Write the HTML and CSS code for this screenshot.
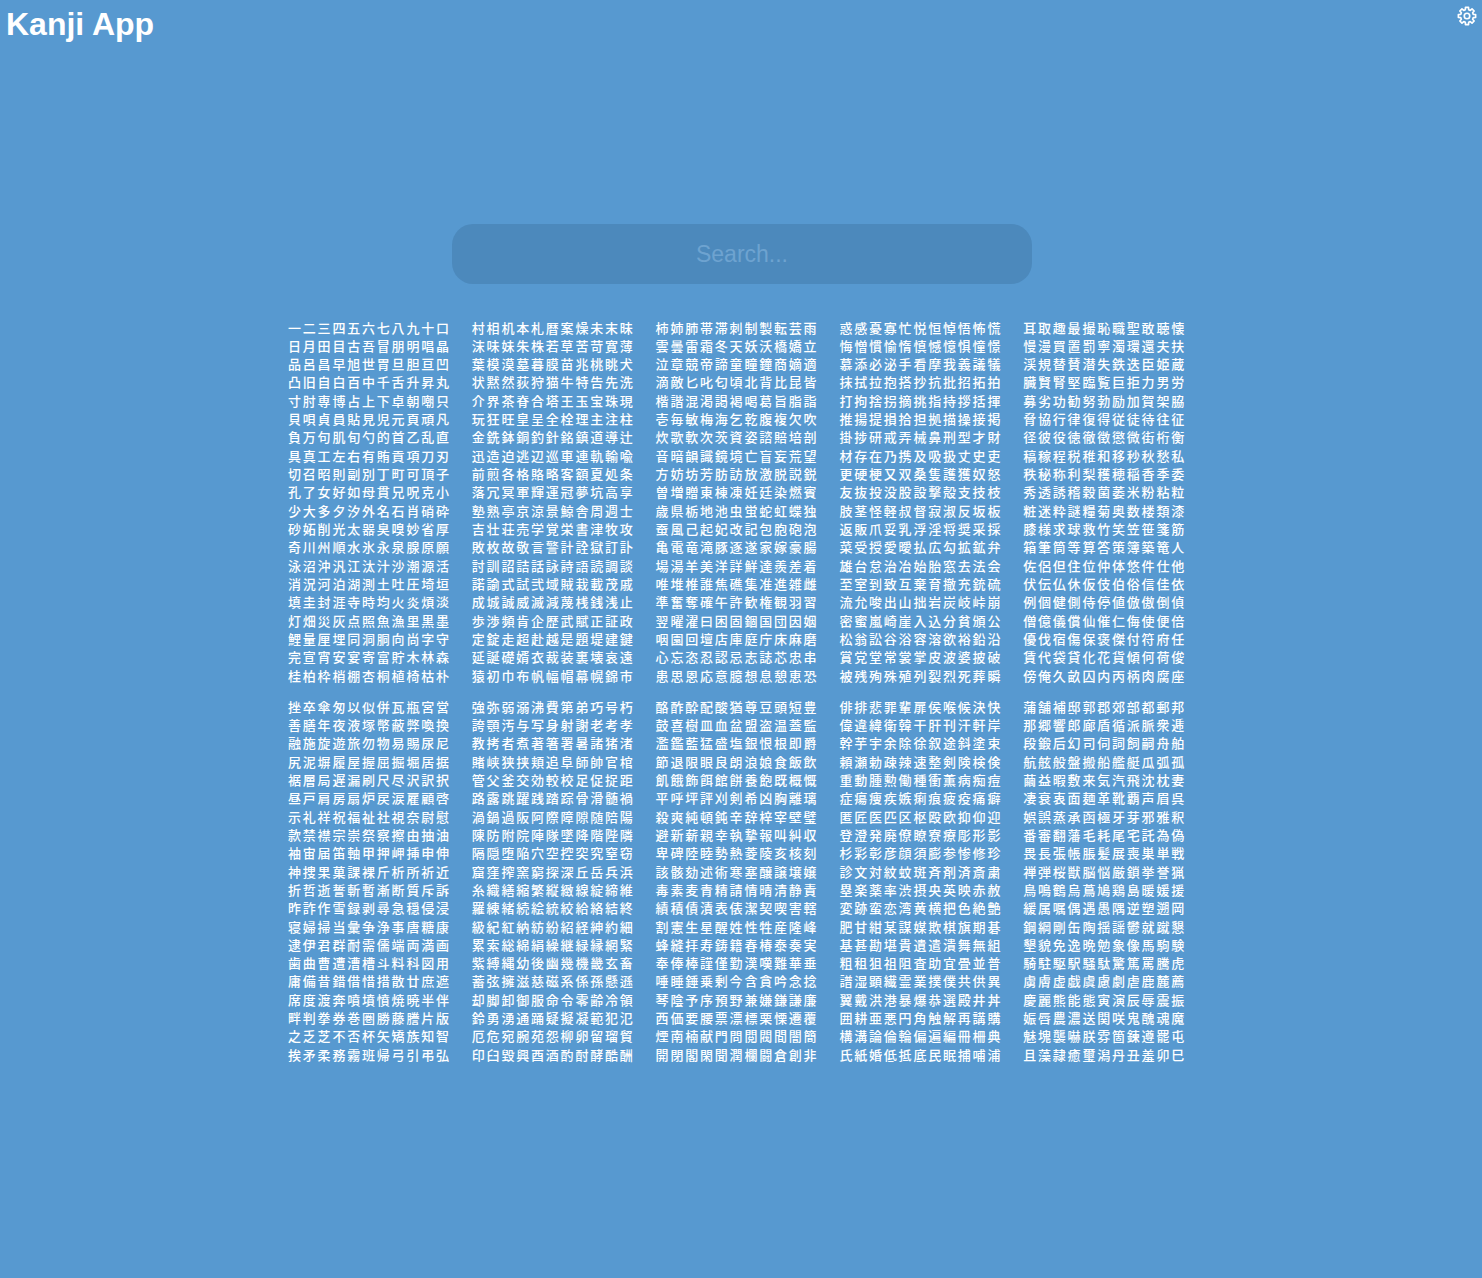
FILE: index.html
```html
<!DOCTYPE html>
<html lang="ja">
<head>
    <meta charset="UTF-8">
    <meta name="viewport" content="width=device-width, initial-scale=1.0">
    <title>Kanji App</title>
    <link rel="stylesheet" href="styles.css">
</head>
<body>
    <header class="top-bar">
        <h1>Kanji App</h1>
        <button class="settings" aria-label="Settings">
            <svg viewBox="0 0 24 24" width="20" height="20" fill="none" stroke="white" stroke-width="2" stroke-linejoin="round">
                <polygon points="9.98,4.47 10.18,1.66 13.82,1.66 14.02,4.47 15.90,5.25 18.02,3.40 20.60,5.98 18.75,8.10 19.53,9.98 22.34,10.18 22.34,13.82 19.53,14.02 18.75,15.90 20.60,18.02 18.02,20.60 15.90,18.75 14.02,19.53 13.82,22.34 10.18,22.34 9.98,19.53 8.10,18.75 5.98,20.60 3.40,18.02 5.25,15.90 4.47,14.02 1.66,13.82 1.66,10.18 4.47,9.98 5.25,8.10 3.40,5.98 5.98,3.40 8.10,5.25"/>
                <circle cx="12" cy="12" r="3.3"/>
            </svg>
        </button>
    </header>

    <div class="search-wrap">
        <input class="search" type="text" placeholder="Search...">
    </div>

    <main class="kanji-list">
        <section class="kanji-block">
            <div class="kanji-col">
                <p>一二三四五六七八九十口</p>
                <p>日月田目古吾冒朋明唱晶</p>
                <p>品呂昌早旭世胃旦胆亘凹</p>
                <p>凸旧自白百中千舌升昇丸</p>
                <p>寸肘専博占上下卓朝嘲只</p>
                <p>貝唄貞員貼見児元頁頑凡</p>
                <p>負万句肌旬勺的首乙乱直</p>
                <p>具真工左右有賄貢項刀刃</p>
                <p>切召昭則副別丁町可頂子</p>
                <p>孔了女好如母貫兄呪克小</p>
                <p>少大多夕汐外名石肖硝砕</p>
                <p>砂妬削光太器臭嗅妙省厚</p>
                <p>奇川州順水氷永泉腺原願</p>
                <p>泳沼沖汎江汰汁沙潮源活</p>
                <p>消況河泊湖測土吐圧埼垣</p>
                <p>填圭封涯寺時均火炎煩淡</p>
                <p>灯畑災灰点照魚漁里黒墨</p>
                <p>鯉量厘埋同洞胴向尚字守</p>
                <p>完宣宵安宴寄富貯木林森</p>
                <p>桂柏枠梢棚杏桐植椅枯朴</p>
            </div>
            <div class="kanji-col">
                <p>村相机本札暦案燥未末昧</p>
                <p>沫味妹朱株若草苦苛寛薄</p>
                <p>葉模漠墓暮膜苗兆桃眺犬</p>
                <p>状黙然荻狩猫牛特告先洗</p>
                <p>介界茶脊合塔王玉宝珠現</p>
                <p>玩狂旺皇呈全栓理主注柱</p>
                <p>金銑鉢銅釣針銘鎮道導辻</p>
                <p>迅造迫逃辺巡車連軌輸喩</p>
                <p>前煎各格賂略客額夏処条</p>
                <p>落冗冥軍輝運冠夢坑高享</p>
                <p>塾熟亭京涼景鯨舎周週士</p>
                <p>吉壮荘売学覚栄書津牧攻</p>
                <p>敗枚故敬言警計詮獄訂訃</p>
                <p>討訓詔詰話詠詩語読調談</p>
                <p>諾諭式試弐域賊栽載茂戚</p>
                <p>成城誠威滅減蔑桟銭浅止</p>
                <p>歩渉頻肯企歴武賦正証政</p>
                <p>定錠走超赴越是題堤建鍵</p>
                <p>延誕礎婿衣裁装裏壊哀遠</p>
                <p>猿初巾布帆幅帽幕幌錦市</p>
            </div>
            <div class="kanji-col">
                <p>柿姉肺帯滞刺制製転芸雨</p>
                <p>雲曇雷霜冬天妖沃橋嬌立</p>
                <p>泣章競帝諦童瞳鐘商嫡適</p>
                <p>滴敵匕叱匂頃北背比昆皆</p>
                <p>楷諧混渇謁褐喝葛旨脂詣</p>
                <p>壱毎敏梅海乞乾腹複欠吹</p>
                <p>炊歌軟次茨資姿諮賠培剖</p>
                <p>音暗韻識鏡境亡盲妄荒望</p>
                <p>方妨坊芳肪訪放激脱説鋭</p>
                <p>曽増贈東棟凍妊廷染燃賓</p>
                <p>歳県栃地池虫蛍蛇虹蝶独</p>
                <p>蚕風己起妃改記包胞砲泡</p>
                <p>亀電竜滝豚逐遂家嫁豪腸</p>
                <p>場湯羊美洋詳鮮達羨差着</p>
                <p>唯堆椎誰焦礁集准進雑雌</p>
                <p>準奮奪確午許歓権観羽習</p>
                <p>翌曜濯曰困固錮国団因姻</p>
                <p>咽園回壇店庫庭庁床麻磨</p>
                <p>心忘恣忍認忌志誌芯忠串</p>
                <p>患思恩応意臆想息憩恵恐</p>
            </div>
            <div class="kanji-col">
                <p>惑感憂寡忙悦恒悼悟怖慌</p>
                <p>悔憎慣愉惰慎憾憶惧憧憬</p>
                <p>慕添必泌手看摩我義議犠</p>
                <p>抹拭拉抱搭抄抗批招拓拍</p>
                <p>打拘捨拐摘挑指持拶括揮</p>
                <p>推揚提損拾担拠描操接掲</p>
                <p>掛捗研戒弄械鼻刑型才財</p>
                <p>材存在乃携及吸扱丈史吏</p>
                <p>更硬梗又双桑隻護獲奴怒</p>
                <p>友抜投没股設撃殻支技枝</p>
                <p>肢茎怪軽叔督寂淑反坂板</p>
                <p>返販爪妥乳浮淫将奨采採</p>
                <p>菜受授愛曖払広勾拡鉱弁</p>
                <p>雄台怠治冶始胎窓去法会</p>
                <p>至室到致互棄育撤充銃硫</p>
                <p>流允唆出山拙岩炭岐峠崩</p>
                <p>密蜜嵐崎崖入込分貧頒公</p>
                <p>松翁訟谷浴容溶欲裕鉛沿</p>
                <p>賞党堂常裳掌皮波婆披破</p>
                <p>被残殉殊殖列裂烈死葬瞬</p>
            </div>
            <div class="kanji-col">
                <p>耳取趣最撮恥職聖敢聴懐</p>
                <p>慢漫買置罰寧濁環還夫扶</p>
                <p>渓規替賛潜失鉄迭臣姫蔵</p>
                <p>臓賢腎堅臨覧巨拒力男労</p>
                <p>募劣功勧努勃励加賀架脇</p>
                <p>脅協行律復得従徒待往征</p>
                <p>径彼役徳徹徴懲微街桁衡</p>
                <p>稿稼程税稚和移秒秋愁私</p>
                <p>秩秘称利梨穫穂稲香季委</p>
                <p>秀透誘稽穀菌萎米粉粘粒</p>
                <p>粧迷粋謎糧菊奥数楼類漆</p>
                <p>膝様求球救竹笑笠笹箋筋</p>
                <p>箱筆筒等算答策簿築篭人</p>
                <p>佐侶但住位仲体悠件仕他</p>
                <p>伏伝仏休仮伎伯俗信佳依</p>
                <p>例個健側侍停値倣傲倒偵</p>
                <p>僧億儀償仙催仁侮使便倍</p>
                <p>優伐宿傷保褒傑付符府任</p>
                <p>賃代袋貸化花貨傾何荷俊</p>
                <p>傍俺久畝囚内丙柄肉腐座</p>
            </div>
        </section>

        <section class="kanji-block">
            <div class="kanji-col">
                <p>挫卒傘匆以似併瓦瓶宮営</p>
                <p>善膳年夜液塚幣蔽弊喚換</p>
                <p>融施旋遊旅勿物易賜尿尼</p>
                <p>尻泥塀履屋握屈掘堀居据</p>
                <p>裾層局遅漏刷尺尽沢訳択</p>
                <p>昼戸肩房扇炉戻涙雇顧啓</p>
                <p>示礼祥祝福祉社視奈尉慰</p>
                <p>款禁襟宗崇祭察擦由抽油</p>
                <p>袖宙届笛軸甲押岬挿申伸</p>
                <p>神捜果菓課裸斤析所祈近</p>
                <p>折哲逝誓斬暫漸断質斥訴</p>
                <p>昨詐作雪録剥尋急穏侵浸</p>
                <p>寝婦掃当彙争浄事唐糖康</p>
                <p>逮伊君群耐需儒端両満画</p>
                <p>歯曲曹遭漕槽斗料科図用</p>
                <p>庸備昔錯借惜措散廿庶遮</p>
                <p>席度渡奔噴墳憤焼暁半伴</p>
                <p>畔判拳券巻圏勝藤謄片版</p>
                <p>之乏芝不否杯矢矯族知智</p>
                <p>挨矛柔務霧班帰弓引弔弘</p>
            </div>
            <div class="kanji-col">
                <p>強弥弱溺沸費第弟巧号朽</p>
                <p>誇顎汚与写身射謝老考孝</p>
                <p>教拷者煮著箸署暑諸猪渚</p>
                <p>賭峡狭挟頬追阜師帥官棺</p>
                <p>管父釜交効較校足促捉距</p>
                <p>路露跳躍践踏踪骨滑髄禍</p>
                <p>渦鍋過阪阿際障隙随陪陽</p>
                <p>陳防附院陣隊墜降階陛隣</p>
                <p>隔隠堕陥穴空控突究窒窃</p>
                <p>窟窪搾窯窮探深丘岳兵浜</p>
                <p>糸織繕縮繁縦緻線綻締維</p>
                <p>羅練緒続絵統絞給絡結終</p>
                <p>級紀紅納紡紛紹経紳約細</p>
                <p>累索総綿絹繰継緑縁網緊</p>
                <p>紫縛縄幼後幽幾機畿玄畜</p>
                <p>蓄弦擁滋慈磁系係孫懸遜</p>
                <p>却脚卸御服命令零齢冷領</p>
                <p>鈴勇湧通踊疑擬凝範犯氾</p>
                <p>厄危宛腕苑怨柳卵留瑠貿</p>
                <p>印臼毀興酉酒酌酎酵酷酬</p>
            </div>
            <div class="kanji-col">
                <p>酪酢酔配酸猶尊豆頭短豊</p>
                <p>鼓喜樹皿血盆盟盗温蓋監</p>
                <p>濫鑑藍猛盛塩銀恨根即爵</p>
                <p>節退限眼良朗浪娘食飯飲</p>
                <p>飢餓飾餌館餅養飽既概慨</p>
                <p>平呼坪評刈剣希凶胸離璃</p>
                <p>殺爽純頓鈍辛辞梓宰壁璧</p>
                <p>避新薪親幸執摯報叫糾収</p>
                <p>卑碑陸睦勢熱菱陵亥核刻</p>
                <p>該骸劾述術寒塞醸譲壌嬢</p>
                <p>毒素麦青精請情晴清静責</p>
                <p>績積債漬表俵潔契喫害轄</p>
                <p>割憲生星醒姓性牲産隆峰</p>
                <p>蜂縫拝寿鋳籍春椿泰奏実</p>
                <p>奉俸棒謹僅勤漢嘆難華垂</p>
                <p>唾睡錘乗剰今含貪吟念捻</p>
                <p>琴陰予序預野兼嫌鎌謙廉</p>
                <p>西価要腰票漂標栗慄遷覆</p>
                <p>煙南楠献門問閲閥間闇簡</p>
                <p>開閉閣閑聞潤欄闘倉創非</p>
            </div>
            <div class="kanji-col">
                <p>俳排悲罪輩扉侯喉候決快</p>
                <p>偉違緯衛韓干肝刊汗軒岸</p>
                <p>幹芋宇余除徐叙途斜塗束</p>
                <p>頼瀬勅疎辣速整剣険検倹</p>
                <p>重動腫勲働種衝薫病痴痘</p>
                <p>症瘍痩疾嫉痢痕疲疫痛癖</p>
                <p>匿匠医匹区枢殴欧抑仰迎</p>
                <p>登澄発廃僚瞭寮療彫形影</p>
                <p>杉彩彰彦顔須膨参惨修珍</p>
                <p>診文対紋蚊斑斉剤済斎粛</p>
                <p>塁楽薬率渋摂央英映赤赦</p>
                <p>変跡蛮恋湾黄横把色絶艶</p>
                <p>肥甘紺某謀媒欺棋旗期碁</p>
                <p>基甚勘堪貴遺遣潰舞無組</p>
                <p>粗租狙祖阻査助宜畳並普</p>
                <p>譜湿顕繊霊業撲僕共供異</p>
                <p>翼戴洪港暴爆恭選殿井丼</p>
                <p>囲耕亜悪円角触解再講購</p>
                <p>構溝論倫輪偏遍編冊柵典</p>
                <p>氏紙婚低抵底民眠捕哺浦</p>
            </div>
            <div class="kanji-col">
                <p>蒲舗補邸郭郡郊部都郵邦</p>
                <p>那郷響郎廊盾循派脈衆逓</p>
                <p>段鍛后幻司伺詞飼嗣舟舶</p>
                <p>航舷般盤搬船艦艇瓜弧孤</p>
                <p>繭益暇敷来気汽飛沈枕妻</p>
                <p>凄衰衷面麺革靴覇声眉呉</p>
                <p>娯誤蒸承函極牙芽邪雅釈</p>
                <p>番審翻藩毛耗尾宅託為偽</p>
                <p>畏長張帳脹髪展喪巣単戦</p>
                <p>禅弾桜獣脳悩厳鎖挙誉猟</p>
                <p>鳥鳴鶴烏蔦鳩鶏島暖媛援</p>
                <p>緩属嘱偶遇愚隅逆塑遡岡</p>
                <p>鋼綱剛缶陶揺謡鬱就蹴懇</p>
                <p>墾貌免逸晩勉象像馬駒験</p>
                <p>騎駐駆駅騒駄驚篤罵騰虎</p>
                <p>虜膚虚戯虞慮劇虐鹿麓薦</p>
                <p>慶麗熊能態寅演辰辱震振</p>
                <p>娠唇農濃送関咲鬼醜魂魔</p>
                <p>魅塊襲嚇朕雰箇錬遵罷屯</p>
                <p>且藻隷癒璽潟丹丑羞卯巳</p>
            </div>
        </section>
    </main>
</body>
</html>
```

FILE: styles.css
```css
body {
    margin: 0;
    min-height: 1278px;
    background-color: #5799d0;
    color: white;
    font-family: "Liberation Sans", Arial, sans-serif;
}
.top-bar {
    display: flex;
    justify-content: space-between;
    align-items: flex-start;
    padding: 6px 5px 0 6px;
    height: 218px;
}
.top-bar h1 {
    margin: 0;
    font-size: 32px;
    line-height: 37px;
    font-weight: bold;
}
.settings {
    padding: 0;
    border: none;
    background: none;
    cursor: pointer;
}
.search-wrap {
    display: flex;
    justify-content: center;
    padding-left: 2px;
}
.search {
    box-sizing: border-box;
    width: 580px;
    height: 60px;
    border: none;
    border-radius: 21px;
    background-color: #4c89bc;
    color: white;
    font-family: "Liberation Sans", Arial, sans-serif;
    font-size: 23px;
    font-weight: 500;
    text-align: center;
}
.search::placeholder {
    color: #6ea3d0;
}
.kanji-list {
    box-sizing: border-box;
    width: 906px;
    margin: 34.5px auto 0;
    padding-right: 8px;
    display: flex;
    flex-direction: column;
    gap: 12.5px;
}
.kanji-block {
    display: flex;
    justify-content: space-between;
}
.kanji-col p {
    margin: 0;
    font-family: "Noto Sans CJK JP", sans-serif;
    font-size: 13px;
    font-weight: 500;
    line-height: 18.33px;
    letter-spacing: 1.8px;
    white-space: nowrap;
}
```
